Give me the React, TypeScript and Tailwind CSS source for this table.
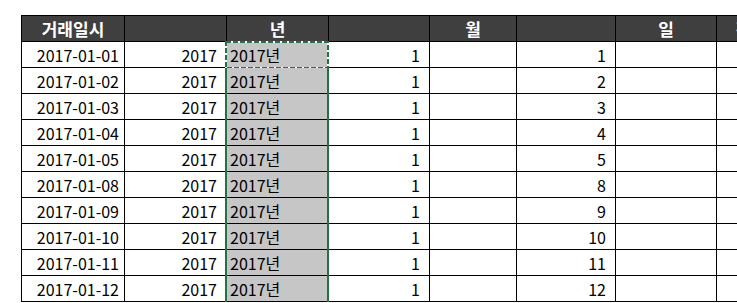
import React from "react";

const days = [1, 2, 3, 4, 5, 8, 9, 10, 11, 12];

const rows = days.map((d) => ({
  date: `2017-01-${String(d).padStart(2, "0")}`,
  year: 2017,
  month: 1,
  day: d,
}));

const font = { fontFamily: '"Noto Sans CJK KR", "Noto Sans", sans-serif' };

function HeaderCell({ w, label }: { w: string; label?: string }) {
  return (
    <div
      className={`${w} h-full shrink-0 border-l border-black flex items-center justify-center font-bold text-white text-[17px] whitespace-nowrap overflow-hidden`}
    >
      {label}
    </div>
  );
}

export default function App() {
  return (
    <div className="w-[737px] h-[303px] overflow-hidden bg-white pt-[15px] pl-[21px]" style={font}>
      <div className="w-[800px]">
        {/* header */}
        <div className="flex h-[27px] bg-[#3f3f3f] border-t border-b border-black leading-none">
          <HeaderCell w="w-[103px]" label="거래일시" />
          <HeaderCell w="w-[102px]" />
          <HeaderCell w="w-[102px]" label="년" />
          <HeaderCell w="w-[101px]" />
          <HeaderCell w="w-[87px]" label="월" />
          <HeaderCell w="w-[99px]" />
          <HeaderCell w="w-[101px]" label="일" />
          <HeaderCell w="w-[101px]" label="전일대비" />
        </div>

        {rows.map((r, i) => (
          <div key={r.date} className="flex h-[26px] text-[16px] text-black leading-none">
            <div className="w-[103px] shrink-0 border-l border-b border-black flex items-center justify-end pr-[5px]">
              {r.date}
            </div>
            <div className="w-[102px] shrink-0 border-l border-b border-black flex items-center justify-end pr-[9px]">
              {r.year}
            </div>
            <div className="relative w-[102px] shrink-0 border-l border-b border-black bg-[#c6c6c6] flex items-center pl-[3px]">
              {r.year}년
              <div className="absolute -left-[2px] top-0 bottom-[-1px] w-[2px] bg-[#217346]" />
              <div className="absolute -right-[1px] top-0 bottom-[-1px] w-[2px] bg-[#217346]" />
              {i === 0 && (
                <svg
                  className="absolute -left-[2px] -top-[1px] w-[104px] h-[28px]"
                  viewBox="0 0 104 28"
                >
                  <rect x="1" y="1" width="102" height="26" fill="none" stroke="#ffffff" strokeWidth="2" />
                  <rect
                    x="1"
                    y="1"
                    width="102"
                    height="26"
                    fill="none"
                    stroke="#217346"
                    strokeWidth="2"
                    strokeDasharray="5 2"
                  />
                </svg>
              )}
            </div>
            <div className="w-[101px] shrink-0 border-l border-b border-black flex items-center justify-end pr-[9px]">
              {r.month}
            </div>
            <div className="w-[87px] shrink-0 border-l border-b border-black" />
            <div className="w-[99px] shrink-0 border-l border-b border-black flex items-center justify-end pr-[9px]">
              {r.day}
            </div>
            <div className="w-[101px] shrink-0 border-l border-b border-black" />
            <div className="w-[101px] shrink-0 border-l border-b border-black" />
          </div>
        ))}
      </div>
    </div>
  );
}
